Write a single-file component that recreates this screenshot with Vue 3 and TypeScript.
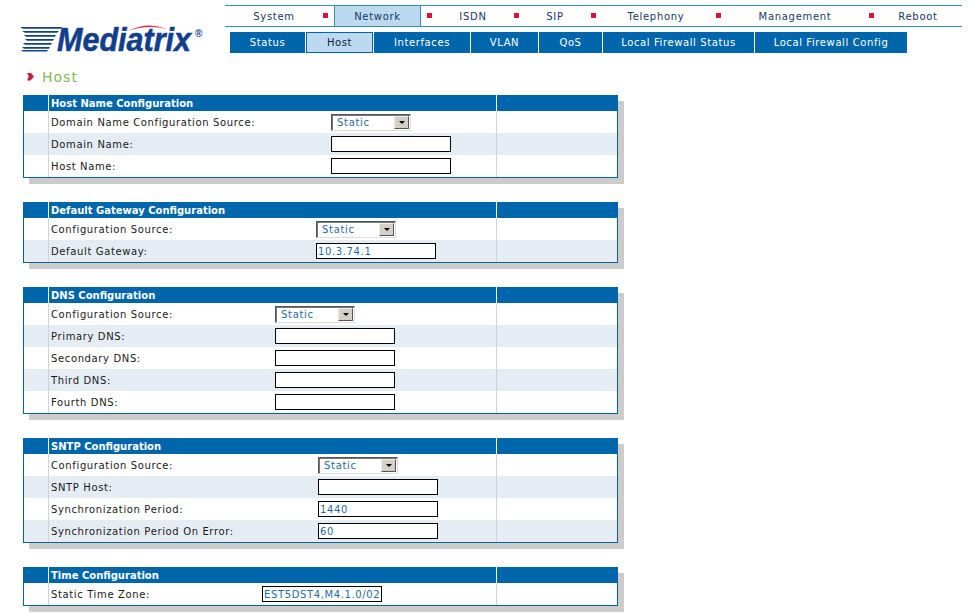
<template>
  <div class="page">
    <header class="header">
      <div class="logo">
        <svg width="190" height="38" viewBox="0 0 190 38">
          <g fill="#123f8c">
            <path d="M5 7H47L46 8.7H8Z" />
            <path d="M7 11H44L42 12.7H10Z" />
            <path d="M9 15H41L40 16.7H11Z" />
            <path d="M10 19H39L38 20.7H12Z" />
            <path d="M8 23H37L36 24.7H10Z" />
            <path d="M7 27H35L34 28.7H9Z" />
            <path d="M6 30H33L32 31.5H8Z" />
          </g>
          <path d="M113 11Q132 1 152 9Q132 4 113 11Z" fill="#c8313f" />
          <text class="logo-word" x="42" y="31" textLength="134" lengthAdjust="spacingAndGlyphs">Mediatrix</text>
          <text class="logo-reg" x="180" y="17">®</text>
        </svg>
      </div>
      <div class="navs">
        <nav class="main-nav">
          <template v-for="item in mainItems" :key="item.label">
            <span v-if="item.marker" class="marker"></span>
            <a class="main-link" :class="{ 'main-link--active': item.active }" :style="{ width: `${item.width}px` }" href="#">{{ item.label }}</a>
          </template>
        </nav>
        <nav class="sub-nav">
          <a
            v-for="item in subItems"
            :key="item.label"
            class="sub-link"
            :class="{ 'sub-link--active': item.active }"
            :style="{ width: `${item.width}px` }"
            href="#"
          >{{ item.label }}</a>
        </nav>
      </div>
    </header>

    <h1 class="title"><span class="chevron"></span>Host</h1>

    <section
      v-for="table in tables"
      :key="table.title"
      class="panel"
    >
      <div class="row row--head">
        <div class="cell-gutter"></div>
        <div class="cell-main">{{ table.title }}</div>
        <div class="cell-extra"></div>
      </div>
      <div v-for="field in table.fields" :key="field.label" class="row">
        <div class="cell-gutter"></div>
        <div class="cell-main">
          <label class="label" :style="{ width: `${table.labelWidth}px` }">{{ field.label }}</label>
          <div v-if="field.select" class="select">
            <span class="select-value">{{ field.value }}</span>
            <span class="select-btn"><i class="select-arrow"></i></span>
          </div>
          <input v-else class="input" type="text" :value="field.value" />
        </div>
        <div class="cell-extra"></div>
      </div>
    </section>
  </div>
</template>

<script setup lang="ts">
interface MainItem { label: string; width: number; marker?: boolean; active?: boolean }
interface SubItem { label: string; width: number; active?: boolean }
interface Field { label: string; value: string; select?: boolean }
interface Table { title: string; labelWidth: number; fields: Field[] }

const mainItems: MainItem[] = [
  { label: 'System', width: 98 },
  { label: 'Network', width: 87, marker: true, active: true },
  { label: 'ISDN', width: 82, marker: true },
  { label: 'SIP', width: 72, marker: true },
  { label: 'Telephony', width: 120, marker: true },
  { label: 'Management', width: 148, marker: true },
  { label: 'Reboot', width: 88, marker: true },
]

const subItems: SubItem[] = [
  { label: 'Status', width: 76 },
  { label: 'Host', width: 68, active: true },
  { label: 'Interfaces', width: 97 },
  { label: 'VLAN', width: 68 },
  { label: 'QoS', width: 64 },
  { label: 'Local Firewall Status', width: 152 },
  { label: 'Local Firewall Config', width: 152 },
]

const tables: Table[] = [
  {
    title: 'Host Name Configuration',
    labelWidth: 280,
    fields: [
      { label: 'Domain Name Configuration Source:', value: 'Static', select: true },
      { label: 'Domain Name:', value: '' },
      { label: 'Host Name:', value: '' },
    ],
  },
  {
    title: 'Default Gateway Configuration',
    labelWidth: 265,
    fields: [
      { label: 'Configuration Source:', value: 'Static', select: true },
      { label: 'Default Gateway:', value: '10.3.74.1' },
    ],
  },
  {
    title: 'DNS Configuration',
    labelWidth: 224,
    fields: [
      { label: 'Configuration Source:', value: 'Static', select: true },
      { label: 'Primary DNS:', value: '' },
      { label: 'Secondary DNS:', value: '' },
      { label: 'Third DNS:', value: '' },
      { label: 'Fourth DNS:', value: '' },
    ],
  },
  {
    title: 'SNTP Configuration',
    labelWidth: 267,
    fields: [
      { label: 'Configuration Source:', value: 'Static', select: true },
      { label: 'SNTP Host:', value: '' },
      { label: 'Synchronization Period:', value: '1440' },
      { label: 'Synchronization Period On Error:', value: '60' },
    ],
  },
  {
    title: 'Time Configuration',
    labelWidth: 211,
    fields: [{ label: 'Static Time Zone:', value: 'EST5DST4,M4.1.0/02' }],
  },
]
</script>

<style scoped>
.page {
  width: 968px;
  font-family: "DejaVu Sans", Verdana, sans-serif;
  font-size: 10px;
  color: #1a1a1a;
}

.header {
  display: flex;
  align-items: flex-start;
}

.logo {
  width: 225px;
  padding: 20px 0 0 15px;
  box-sizing: border-box;
  height: 56px;
}

.logo svg {
  display: block;
}

.logo-word {
  font-family: "Liberation Sans", Arial, sans-serif;
  font-weight: 700;
  font-style: italic;
  font-size: 34px;
  fill: #123f8c;
  stroke: #123f8c;
  stroke-width: 0.6px;
}

.logo-reg {
  font-family: "Liberation Sans", Arial, sans-serif;
  font-size: 10px;
  font-weight: 700;
  fill: #123f8c;
}

.navs {
  margin-top: 5px;
}

.main-nav {
  display: flex;
  align-items: stretch;
  width: 737px;
  height: 22px;
  box-sizing: border-box;
  border-top: 1px solid #2d94b4;
  border-bottom: 1px solid #2d94b4;
}

.main-link {
  display: flex;
  align-items: center;
  justify-content: center;
  color: #143a66;
  text-decoration: none;
  letter-spacing: 0.7px;
}

.main-link--active {
  background: #bcd9f0;
  border-left: 1px solid #2d94b4;
  border-right: 1px solid #2d94b4;
  box-sizing: border-box;
  margin: 0 6px;
}

.marker {
  flex: none;
  align-self: center;
  width: 5px;
  height: 5px;
  background: #d6143a;
  margin-top: -1px;
}

.sub-nav {
  display: flex;
  margin: 5px 0 0 5px;
}

.sub-link {
  display: flex;
  align-items: center;
  justify-content: center;
  height: 21px;
  border-right: 1px solid #fff;
  box-sizing: border-box;
  background: #0066ab;
  color: #fff;
  text-decoration: none;
  letter-spacing: 0.6px;
}

.sub-link:last-child {
  border-right: 0;
}

.sub-link--active {
  background: #bcd9f0;
  color: #10233a;
  box-shadow: inset 0 0 0 1px #0066ab;
}

.title {
  display: flex;
  align-items: center;
  margin: 12px 0 10px 27px;
  height: 17px;
  font-size: 14px;
  font-weight: 400;
  letter-spacing: 1px;
  color: #86b856;
}

.chevron {
  width: 7px;
  height: 8px;
  margin-right: 8px;
  background: #c8193c;
  clip-path: polygon(0 0, 50% 0, 100% 50%, 50% 100%, 0 100%, 25% 50%);
}

.panel {
  width: 595px;
  margin: 0 0 24px 23px;
  box-sizing: border-box;
  border: 1px solid #006699;
  border-top: 0;
  box-shadow: 6px 6px 0 #cccccc;
}

.row {
  display: flex;
  height: 22px;
  background: #fff;
}

.row:nth-child(odd):not(.row--head) {
  background: #e6ecf3;
}

.row--head {
  height: 16px;
  margin: 0 -1px;
  background: #0066ab;
  color: #fff;
  font-weight: 700;
}

.row--head .cell-gutter,
.row--head .cell-main {
  border-color: #fff;
}

.cell-gutter {
  width: 25px;
  box-sizing: border-box;
  border-right: 1px solid #c5d6e6;
}

.row--head .cell-gutter {
  width: 26px;
}

.cell-main {
  display: flex;
  align-items: center;
  width: 448px;
  padding-left: 2px;
  box-sizing: border-box;
  border-right: 1px solid #c5d6e6;
}

.cell-extra {
  flex: 1;
}

.label {
  flex: none;
  letter-spacing: 0.63px;
}

.select {
  display: flex;
  align-items: center;
  justify-content: space-between;
  width: 80px;
  height: 17px;
  padding: 0 1px 0 5px;
  box-sizing: border-box;
  background: #fff;
  border: 1px solid;
  border-color: #555 #ddd #ddd #555;
  box-shadow: inset 1px 1px 0 #777;
  color: #1f6b9e;
  letter-spacing: 0.7px;
}

.select-btn {
  display: flex;
  align-items: center;
  justify-content: center;
  width: 15px;
  height: 13px;
  background: #d4d0c8;
  border: 1px solid;
  border-color: #eee #555 #555 #eee;
  box-sizing: border-box;
}

.select-arrow {
  width: 0;
  height: 0;
  border-left: 3px solid transparent;
  border-right: 3px solid transparent;
  border-top: 3px solid #000;
}

.input {
  width: 120px;
  height: 16px;
  padding: 0 1px;
  box-sizing: border-box;
  border: 1px solid #000;
  border-radius: 0;
  outline: none;
  background: #fff;
  font: inherit;
  letter-spacing: 0.63px;
  color: #1f6b9e;
}
</style>
